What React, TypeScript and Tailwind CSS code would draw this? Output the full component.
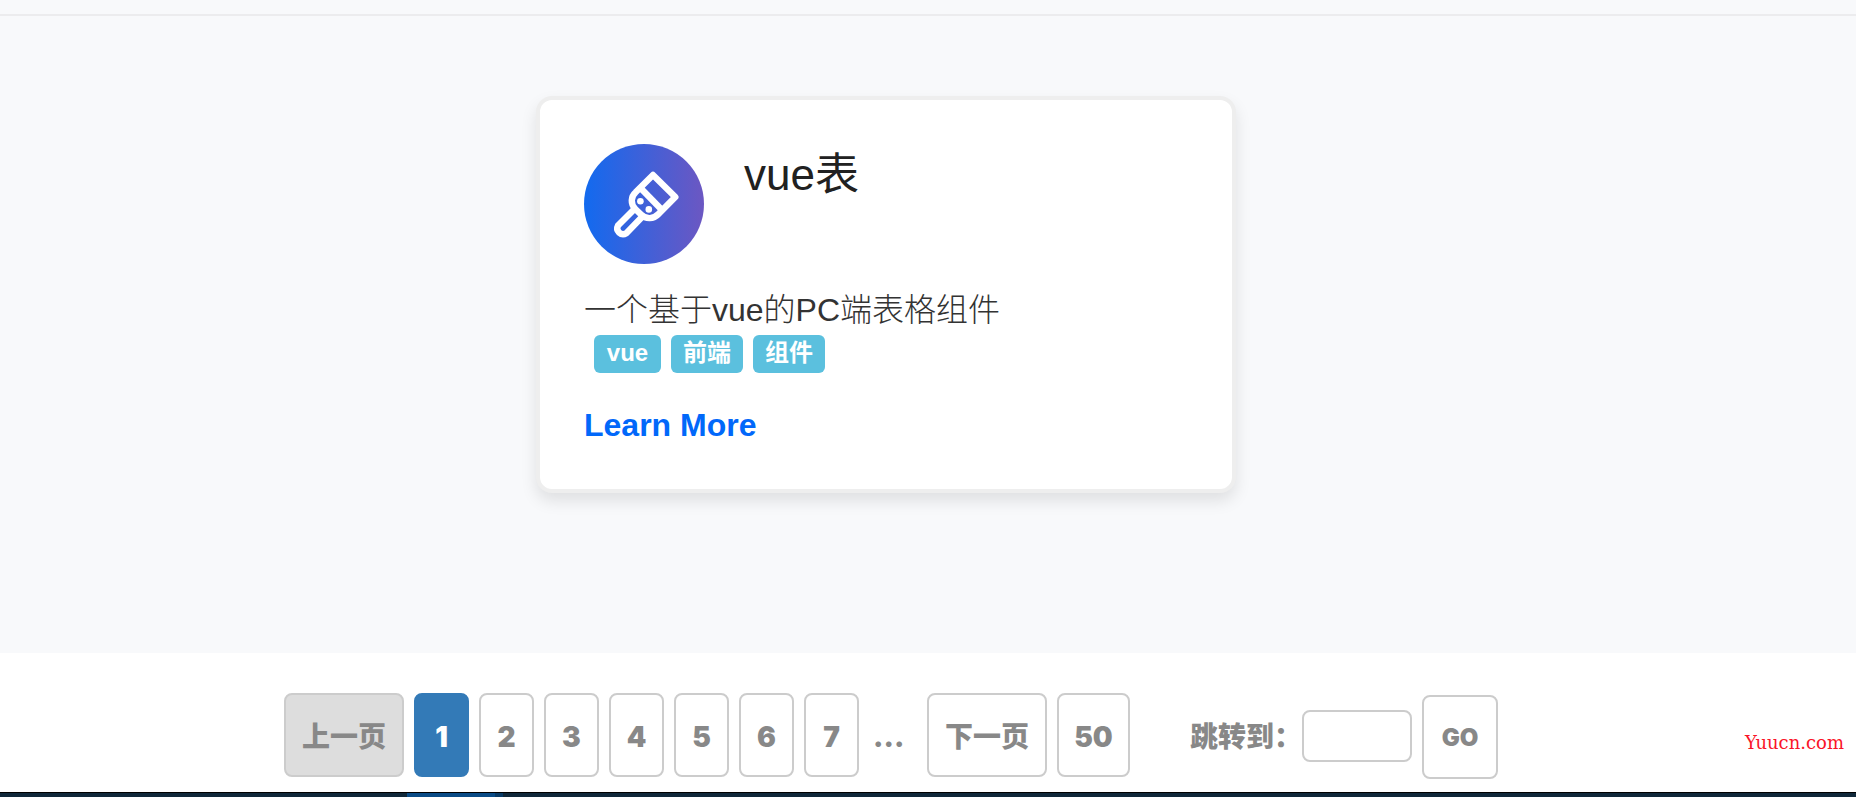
import { useState } from "react";

const tags = ["vue", "前端", "组件"];
const pages = [1, 2, 3, 4, 5, 6, 7];

const pageButton =
  "h-21 shrink-0 cursor-pointer rounded-lg border-2 pt-1 text-[28px] leading-9";

function BrushIcon() {
  return (
    <svg viewBox="0 0 120 120" className="size-30" fill="none" stroke="#fff" strokeWidth="6.4" strokeLinecap="round" strokeLinejoin="round" aria-hidden="true">
      <path d="M69 31 L91.3 53 L74.5 70 C69.5 75.3 62 75.5 57 70.5 L51.3 65 C46.3 60 46.8 52.5 51.6 48.3 Z" />
      <path d="M56.5 44 L77 65" strokeLinecap="butt" />
      <path d="M50 65.5 L34 81.5 A5.9 5.9 0 0 0 42.3 89.3 L57.5 73.5" />
      <circle cx="56.4" cy="57.3" r="3.3" fill="#fff" stroke="none" />
      <circle cx="64.8" cy="65.4" r="3.3" fill="#fff" stroke="none" />
    </svg>
  );
}

function ComponentCard() {
  return (
    <article className="w-full max-w-[700px] rounded-2xl border-4 border-[#eee] bg-white p-11 shadow-[0_8px_16px_rgba(0,0,0,0.1)]">
      <div className="flex items-start gap-10">
        <div className="size-30 shrink-0 rounded-full bg-linear-to-r/srgb from-[#126aef] to-[#6c57c2]">
          <BrushIcon />
        </div>
        <h2 className="text-[44px] leading-[62px] text-[#212121]">vue表</h2>
      </div>
      <p className="mt-6 text-[32px] leading-11 font-light text-[#333]">一个基于vue的PC端表格组件</p>
      <ul className="mt-[3px] flex gap-[10px] pl-[10px]">
        {tags.map((tag) => (
          <li key={tag} className="h-[38px] min-w-[67px] rounded-md bg-[#5bc0de] px-3 text-center text-2xl leading-9 font-bold text-white">
            {tag}
          </li>
        ))}
      </ul>
      <a href="#" className="mt-8 inline-block text-[32px] leading-10 font-bold text-[#0168fa]">
        Learn More
      </a>
    </article>
  );
}

function Pagination() {
  const [current, setCurrent] = useState(1);
  const [target, setTarget] = useState("");

  const go = () => {
    const page = Number(target);
    if (page >= 1 && page <= 50) setCurrent(page);
  };

  return (
    <nav className="flex items-center justify-center gap-[10px] pr-[74px] font-['Inter','Noto_Sans_CJK_SC',sans-serif] font-black text-[#888]">
      <button disabled={current === 1} onClick={() => setCurrent(current - 1)} className={`${pageButton} w-30 border-[#ccc] disabled:bg-[#ddd]`}>
        上一页
      </button>
      {pages.map((page) => (
        <button
          key={page}
          onClick={() => setCurrent(page)}
          className={`${pageButton} w-[55px] ${page === current ? "border-[#337ab7] bg-[#337ab7] text-white" : "border-[#ccc] bg-white"}`}
        >
          {page}
        </button>
      ))}
      <span className="w-12 pt-1 pl-1 text-[28px] leading-9">...</span>
      <button onClick={() => setCurrent(current + 1)} className={`${pageButton} w-30 border-[#ccc]`}>
        下一页
      </button>
      <button onClick={() => setCurrent(50)} className={`${pageButton} w-[73px] border-[#ccc]`}>
        50
      </button>
      <div className="mt-0.5 ml-[50px] flex items-center">
        <label htmlFor="jump" className="pt-0.5 text-[28px] leading-9 whitespace-nowrap">
          跳转到：
        </label>
        <input
          id="jump"
          value={target}
          onChange={(e) => setTarget(e.target.value)}
          className="h-13 w-[110px] rounded-lg border-2 border-[#ccc] px-3 text-2xl"
        />
      </div>
      <button onClick={go} className="mt-1 h-21 w-[76px] shrink-0 cursor-pointer rounded-lg border-2 border-[#ccc] pt-0.5 text-2xl">
        GO
      </button>
    </nav>
  );
}

export default function App() {
  return (
    <div className="relative flex min-h-screen flex-col bg-white font-['Liberation_Sans','Noto_Sans_CJK_SC',sans-serif]" lang="zh-CN">
      <div className="h-4 border-b-2 border-[#ececee] bg-[#f8f9fb]" />
      <main className="flex justify-center bg-[#f8f9fb] pt-20 pr-[84px] pb-40">
        <ComponentCard />
      </main>
      <footer className="pt-[38px] pb-3">
        <Pagination />
      </footer>
      <div className="mt-auto flex h-[5px] border-t border-black bg-[#10283a] pl-[407px]">
        <div className="w-22 bg-[#0a4b86]" />
        <div className="w-2 bg-[#083a66]" />
      </div>
      <span className="absolute right-3 bottom-11 font-['DejaVu_Serif',serif] text-lg leading-5 text-[#fa1428]">Yuucn.com</span>
    </div>
  );
}
